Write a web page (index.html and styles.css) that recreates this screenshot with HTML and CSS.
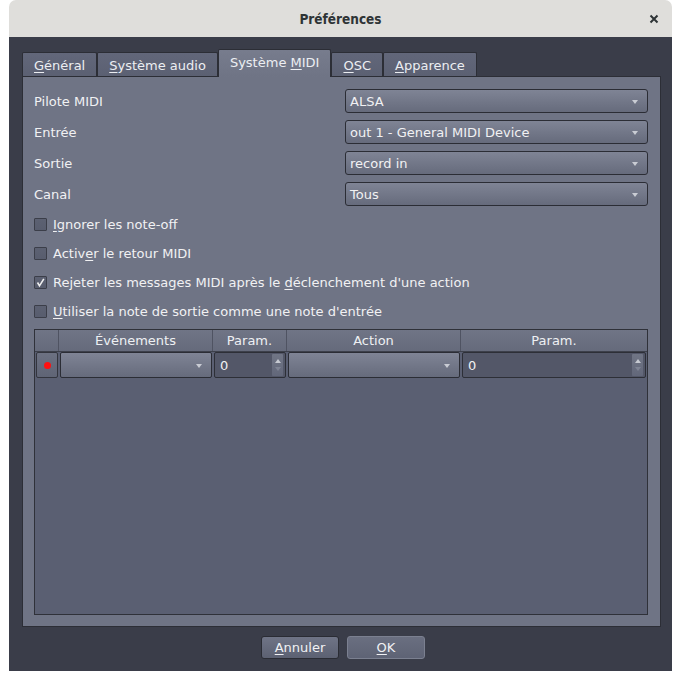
FILE: index.html
```html
<!DOCTYPE html>
<html lang="fr">
<head>
<meta charset="utf-8">
<title>Préférences</title>
<link rel="stylesheet" href="styles.css">
</head>
<body>
<div class="window">
  <div class="titlebar">
    <span class="title">Préférences</span>
    <span class="close"><svg width="10" height="10" viewBox="0 0 10 10"><path d="M1.5 1.5 L8.5 8.5 M8.5 1.5 L1.5 8.5" stroke="#2e3436" stroke-width="2" fill="none"/></svg></span>
  </div>
  <div class="body">
    <div class="tabs">
      <div class="tab"><span><u>G</u>énéral</span></div>
      <div class="tab"><span><u>S</u>ystème audio</span></div>
      <div class="tab active"><span>Système <u>M</u>IDI</span></div>
      <div class="tab"><span><u>O</u>SC</span></div>
      <div class="tab"><span><u>A</u>pparence</span></div>
    </div>
    <div class="pane">
      <div class="form">
        <span class="label">Pilote MIDI</span>
        <div class="combo"><span>ALSA</span><i class="arrow"></i></div>
        <span class="label">Entrée</span>
        <div class="combo"><span>out 1 - General MIDI Device</span><i class="arrow"></i></div>
        <span class="label">Sortie</span>
        <div class="combo"><span>record in</span><i class="arrow"></i></div>
        <span class="label">Canal</span>
        <div class="combo"><span>Tous</span><i class="arrow"></i></div>
      </div>
      <div class="checks">
        <div class="check"><span class="box"></span><span><u>I</u>gnorer les note-off</span></div>
        <div class="check"><span class="box"></span><span>Activ<u>e</u>r le retour MIDI</span></div>
        <div class="check"><span class="box checked"><svg width="11" height="11" viewBox="0 0 11 11"><path d="M2.5 5.5 L4.5 8.8 L8.8 1.8" stroke="#f0f0f0" stroke-width="1.6" fill="none"/></svg></span><span>Rejeter les messages MIDI après le <u>d</u>éclenchement d'une action</span></div>
        <div class="check"><span class="box"></span><span><u>U</u>tiliser la note de sortie comme une note d'entrée</span></div>
      </div>
      <div class="table">
        <div class="thead">
          <div class="th"></div>
          <div class="th">Événements</div>
          <div class="th">Param.</div>
          <div class="th">Action</div>
          <div class="th last">Param.</div>
        </div>
        <div class="trow">
          <div class="cell"><div class="dotbtn"><span class="dot"></span></div></div>
          <div class="cell"><div class="combo small"><span></span><i class="arrow"></i></div></div>
          <div class="cell"><div class="spin"><span>0</span><div class="spinbtns"><i class="up"></i><i class="down"></i></div></div></div>
          <div class="cell"><div class="combo small"><span></span><i class="arrow"></i></div></div>
          <div class="cell"><div class="spin"><span>0</span><div class="spinbtns"><i class="up"></i><i class="down"></i></div></div></div>
        </div>
      </div>
    </div>
    <div class="buttons">
      <div class="btn"><span><u>A</u>nnuler</span></div>
      <div class="btn default"><span><u>O</u>K</span></div>
    </div>
  </div>
</div>
</body>
</html>
```
FILE: styles.css
```css
* { box-sizing: border-box; }
html, body { margin: 0; padding: 0; background: #ffffff; }
body { font-family: "DejaVu Sans", "Liberation Sans", sans-serif; font-size: 13px; color: #f1f1f3; }
u { text-decoration: underline; text-underline-offset: 2px; text-decoration-thickness: 1px; }

.window { margin-left: 9px; width: 663px; }

.titlebar {
  height: 37px;
  background: #dfdedb;
  border-radius: 7px 7px 0 0;
  position: relative;
  display: flex;
  align-items: center;
  justify-content: center;
}
.title { font-family: "DejaVu Sans Condensed", "DejaVu Sans", sans-serif; font-weight: bold; font-size: 13.5px; color: #2e3436; padding-top: 1px; }
.close { position: absolute; right: 13px; top: 14px; width: 10px; height: 10px; display: block; }
.close svg { display: block; }

.body {
  background: #3a3d49;
  padding: 12px 11px 12px 13px;
  display: flex;
  flex-direction: column;
}

.tabs { display: flex; align-items: flex-end; height: 28px; }
.tab {
  height: 25px;
  padding: 0 11px;
  border: 1px solid #2c2e36;
  border-bottom: none;
  border-radius: 2px 2px 0 0;
  background: linear-gradient(#62677a, #5b6072);
  display: flex;
  align-items: center;
  color: #eceef2;
  white-space: nowrap;
}
.tab.active {
  height: 28px;
  background: linear-gradient(#777c8d, #6f7485);
  position: relative;
  z-index: 1;
  padding-bottom: 2px;
}

.pane {
  margin-top: -1px;
  height: 551px;
  border: 1px solid #2c2e36;
  background: #6f7485;
  padding: 12px 12px 11px 11px;
  display: flex;
  flex-direction: column;
}

.form {
  display: grid;
  grid-template-columns: 1fr 303px;
  row-gap: 7px;
  align-items: center;
}

.combo {
  height: 24px;
  border: 1px solid #2b2d35;
  border-radius: 3px;
  background: linear-gradient(#7f8495, #666b7c);
  display: flex;
  align-items: center;
  padding-left: 4px;
  padding-right: 9px;
  white-space: nowrap;
}
.combo span { flex: 1; }
.arrow {
  width: 0; height: 0;
  border-left: 3.5px solid transparent;
  border-right: 3.5px solid transparent;
  border-top: 4px solid #c9ccd4;
  margin-top: 2px;
}

.checks { margin-top: 4px; display: flex; flex-direction: column; }
.check { height: 29px; display: flex; align-items: center; }
.box {
  width: 13px; height: 13px;
  border: 1px solid #3b3e49;
  border-radius: 1px;
  background: linear-gradient(#5c6172, #585d6e);
  margin-right: 6px;
  display: flex;
  align-items: center;
  justify-content: center;
}
.box svg { display: block; }

.table {
  margin-top: 3px;
  height: 286px;
  border: 1px solid #2f3139;
  background: #5a5f72;
}
.thead, .trow {
  display: grid;
  grid-template-columns: 24px 154px 74px 174px 1fr;
}
.thead {
  height: 22px;
  background: linear-gradient(#707586, #656a7b);
  border-bottom: 1px solid #3d404b;
}
.th {
  border-right: 1px solid #4f5362;
  display: flex; align-items: center; justify-content: center;
  color: #eef0f3;
}
.th.last { border-right: none; }
.trow { height: 28px; }
.cell { padding: 0 1px 1px 1px; }
.cell .combo { height: 26px; border-radius: 2px; }
.dotbtn {
  height: 26px;
  border: 1px solid #33353e;
  border-radius: 2px;
  background: linear-gradient(#6c7182, #5f6475);
  display: flex; align-items: center; justify-content: center;
}
.dot { width: 7px; height: 7px; border-radius: 50%; background: #ff1010; }
.spin {
  height: 26px;
  border: 1px solid #2d2f37;
  border-radius: 2px;
  background: #535768;
  display: flex;
  align-items: center;
  padding-left: 5px;
  padding-right: 2px;
}
.spin span { flex: 1; }
.spinbtns {
  width: 11px; height: 22px;
  background: linear-gradient(#707585, #62677a);
  border-radius: 1px;
  display: flex; flex-direction: column; align-items: center; justify-content: space-evenly;
}
.spinbtns i { width: 0; height: 0; border-left: 3px solid transparent; border-right: 3px solid transparent; }
.spinbtns .up { border-bottom: 4px solid #c6c9d1; }
.spinbtns .down { border-top: 4px solid #7f8494; }

.buttons {
  margin-top: 9px;
  display: flex;
  justify-content: center;
  gap: 8px;
  padding-left: 3px;
}
.btn {
  width: 78px; height: 23px;
  border: 1px solid #2a2c34;
  border-radius: 3px;
  background: linear-gradient(#6f7486, #5c6172);
  display: flex; align-items: center; justify-content: center;
  color: #f0f1f4;
}
.btn.default { border-color: #7b8090; background: linear-gradient(#6a6f80, #5e6375); }
```
